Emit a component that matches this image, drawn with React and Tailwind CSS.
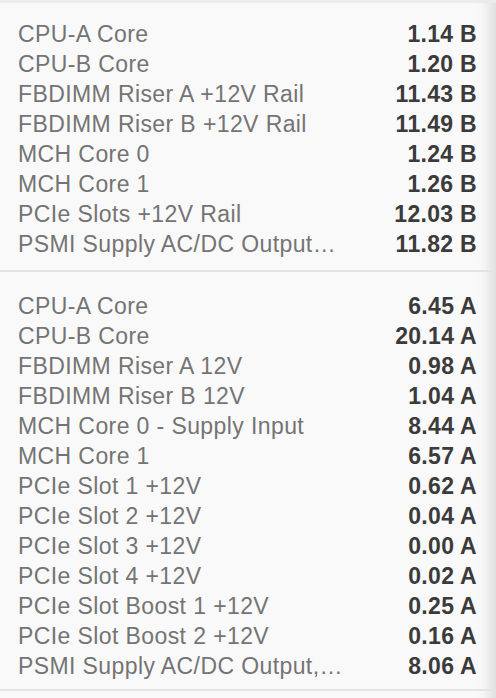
const voltages = [
  ["CPU-A Core", "1.14 B"],
  ["CPU-B Core", "1.20 B"],
  ["FBDIMM Riser A +12V Rail", "11.43 B"],
  ["FBDIMM Riser B +12V Rail", "11.49 B"],
  ["MCH Core 0", "1.24 B"],
  ["MCH Core 1", "1.26 B"],
  ["PCIe Slots +12V Rail", "12.03 B"],
  ["PSMI Supply AC/DC Output…", "11.82 B"],
];

const currents = [
  ["CPU-A Core", "6.45 A"],
  ["CPU-B Core", "20.14 A"],
  ["FBDIMM Riser A 12V", "0.98 A"],
  ["FBDIMM Riser B 12V", "1.04 A"],
  ["MCH Core 0 - Supply Input", "8.44 A"],
  ["MCH Core 1", "6.57 A"],
  ["PCIe Slot 1 +12V", "0.62 A"],
  ["PCIe Slot 2 +12V", "0.04 A"],
  ["PCIe Slot 3 +12V", "0.00 A"],
  ["PCIe Slot 4 +12V", "0.02 A"],
  ["PCIe Slot Boost 1 +12V", "0.25 A"],
  ["PCIe Slot Boost 2 +12V", "0.16 A"],
  ["PSMI Supply AC/DC Output,…", "8.06 A"],
];

const SensorRow = ({ label, value }) => (
  <div className="flex items-center justify-between h-[30px] leading-[30px]">
    <span className="w-[340px] truncate text-[#747474] tracking-[0.4px]">{label}</span>
    <span className="font-bold text-[#3b3b3b] tracking-[0.3px]">{value}</span>
  </div>
);

const App = () => {
  return (
    <div
      className="min-h-[698px] bg-[#f9f9f9] border-t-[3px] border-[#ebebeb] text-[23px] shadow-[inset_-18px_0_14px_-12px_rgba(0,0,0,0.12)]"
      style={{ fontFamily: '"Liberation Sans", Arial, sans-serif' }}
    >
      {/* Voltages */}
      <section className="pl-[18px] pr-[19px] pt-[16px] pb-[11px] border-b-2 border-[#e3e3e3]">
        {voltages.map(([label, value]) => (
          <SensorRow key={label} label={label} value={value} />
        ))}
      </section>

      {/* Currents */}
      <section className="pl-[18px] pr-[19px] pt-[19px] pb-[8px] border-b-2 border-[#e3e3e3]">
        {currents.map(([label, value]) => (
          <SensorRow key={label} label={label} value={value} />
        ))}
      </section>
    </div>
  );
};

export default App;
